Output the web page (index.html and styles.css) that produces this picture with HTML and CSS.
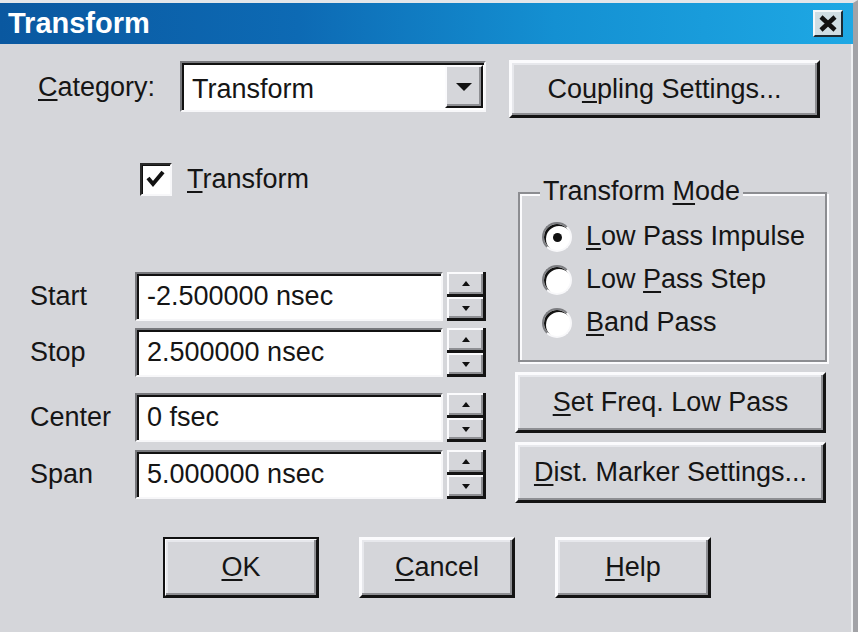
FILE: index.html
```html
<!DOCTYPE html>
<html lang="en">
<head>
  <meta charset="UTF-8">
  <meta name="viewport" content="width=device-width, initial-scale=1.0">
  <title>Transform</title>
  <link rel="stylesheet" href="styles.css">
</head>
<body>

  <div class="window">
    <div class="titlebar">
      <span class="title">Transform</span>
      <span class="close-btn">
        <svg width="24" height="21" viewBox="0 0 24 21">
          <path d="M5 4 L19 17 M19 4 L5 17" stroke="#111" stroke-width="4.5" fill="none"/>
        </svg>
      </span>
    </div>

    <div class="body">
      <div class="top-row">
        <span class="cat-label"><u>C</u>ategory:</span>
        <div class="combo">
          <span class="combo-text">Transform</span>
          <span class="combo-btn"><span class="arrow-down big"></span></span>
        </div>
        <button type="button" class="btn btn-coupling">Co<u>u</u>pling Settings...</button>
      </div>

      <div class="main">
        <div class="left-col">
          <div class="check-row">
            <span class="checkbox">
              <svg width="26" height="27" viewBox="0 0 26 27">
                <path d="M5 12 L10 18 L20 6" stroke="#111" stroke-width="4" fill="none"/>
              </svg>
            </span>
            <span><u>T</u>ransform</span>
          </div>

          <div class="fields">
            <div class="field-row">
              <span class="field-label">Start</span>
              <div class="edit">-2.500000 nsec</div>
              <div class="spin">
                <span class="spin-btn"><span class="arrow-up"></span></span>
                <span class="spin-btn"><span class="arrow-down"></span></span>
              </div>
            </div>
            <div class="field-row">
              <span class="field-label">Stop</span>
              <div class="edit">2.500000 nsec</div>
              <div class="spin">
                <span class="spin-btn"><span class="arrow-up"></span></span>
                <span class="spin-btn"><span class="arrow-down"></span></span>
              </div>
            </div>
            <div class="field-row spaced">
              <span class="field-label">Center</span>
              <div class="edit">0 fsec</div>
              <div class="spin">
                <span class="spin-btn"><span class="arrow-up"></span></span>
                <span class="spin-btn"><span class="arrow-down"></span></span>
              </div>
            </div>
            <div class="field-row">
              <span class="field-label">Span</span>
              <div class="edit">5.000000 nsec</div>
              <div class="spin">
                <span class="spin-btn"><span class="arrow-up"></span></span>
                <span class="spin-btn"><span class="arrow-down"></span></span>
              </div>
            </div>
          </div>
        </div>

        <div class="right-col">
          <div class="group">
            <span class="group-title">Transform <u>M</u>ode</span>
            <div class="radio-row"><span class="radio checked"></span><span><u>L</u>ow Pass Impulse</span></div>
            <div class="radio-row"><span class="radio"></span><span>Low <u>P</u>ass Step</span></div>
            <div class="radio-row"><span class="radio"></span><span><u>B</u>and Pass</span></div>
          </div>
          <button type="button" class="btn btn-wide"><u>S</u>et Freq. Low Pass</button>
          <button type="button" class="btn btn-wide"><u>D</u>ist. Marker Settings...</button>
        </div>
      </div>

      <div class="bottom-row">
        <button type="button" class="btn btn-bottom btn-default"><u>O</u>K</button>
        <button type="button" class="btn btn-bottom"><u>C</u>ancel</button>
        <button type="button" class="btn btn-bottom"><u>H</u>elp</button>
      </div>
    </div>
  </div>

</body>
</html>
```

FILE: styles.css
```css
* {
  box-sizing: border-box;
}

body {
  margin: 0;
  background-color: #fff;
  font-family: "Liberation Sans", Arial, sans-serif;
  font-size: 27px;
  color: #151515;
}

u {
  text-decoration-thickness: 2px;
  text-underline-offset: 3px;
}

.window {
  width: 858px;
  height: 632px;
  background-color: #d5d6da;
  border-top: 3px solid #e3e6ea;
  border-right: 5px solid #a2a3a7;
  box-shadow: inset -2px 0 #eef0f2;
}

/* title bar */
.titlebar {
  height: 41px;
  display: flex;
  align-items: center;
  justify-content: space-between;
  padding: 0 10px 0 8px;
  background: linear-gradient(90deg, #0a58a0 0%, #0d6ab4 35%, #1490d2 65%, #1ea8e4 100%);
}

.title {
  color: #fff;
  font-weight: bold;
  font-size: 29px;
}

.close-btn {
  width: 30px;
  height: 27px;
  display: flex;
  align-items: center;
  justify-content: center;
  background-color: #cfdde3;
  border: 2px solid;
  border-color: #f4f8fa #1b2a33 #1b2a33 #f4f8fa;
}

/* generic raised button */
.btn {
  font: inherit;
  color: inherit;
  background-color: #d5d6da;
  border: 3px solid;
  border-color: #fbfbfd #131313 #131313 #fbfbfd;
  box-shadow: inset -2px -2px #8e8f93, inset 2px 2px #e7e8ec;
  padding: 0;
  cursor: pointer;
}

.body {
  padding-top: 16px;
}

.top-row {
  display: flex;
  align-items: flex-start;
  height: 58px;
  padding-left: 38px;
}

.cat-label {
  width: 142px;
  line-height: 54px;
}

/* sunken white fields */
.combo,
.edit {
  background-color: #fff;
  border: 2px solid;
  border-color: #77787c #f7f7f9 #f7f7f9 #77787c;
  box-shadow: inset 2px 2px #111;
}

.combo {
  width: 306px;
  height: 51px;
  margin-top: 1px;
  display: flex;
}

.combo-text {
  flex: 1;
  padding: 3px 0 0 10px;
  line-height: 47px;
}

.combo-btn {
  width: 38px;
  margin: 2px 1px 2px 0;
  display: flex;
  align-items: center;
  justify-content: center;
  background-color: #d5d6da;
  border: 2px solid;
  border-color: #fbfbfd #131313 #131313 #fbfbfd;
  box-shadow: inset -2px -2px #8e8f93;
}

.arrow-down,
.arrow-up {
  width: 0;
  height: 0;
  border-left: 4px solid transparent;
  border-right: 4px solid transparent;
}

.arrow-down {
  border-top: 5px solid #111;
}

.arrow-up {
  border-bottom: 5px solid #111;
}

.arrow-down.big {
  border-left-width: 8px;
  border-right-width: 8px;
  border-top-width: 8px;
}

.btn-coupling {
  width: 311px;
  height: 58px;
  margin-left: 23px;
}

.main {
  display: flex;
}

/* left column */
.left-col {
  width: 515px;
  padding-left: 30px;
}

.check-row {
  display: flex;
  align-items: center;
  gap: 15px;
  height: 33px;
  margin: 45px 0 0 110px;
}

.checkbox {
  width: 32px;
  height: 33px;
  display: flex;
  align-items: center;
  justify-content: center;
  background-color: #fff;
  border: 2px solid;
  border-color: #2a2a2a #f7f7f9 #f7f7f9 #2a2a2a;
  box-shadow: inset 1px 1px #111;
}

.fields {
  margin-top: 76px;
}

.field-row {
  display: flex;
  height: 49px;
}

.field-row + .field-row {
  margin-top: 7px;
}

.field-row.spaced {
  margin-top: 16px;
}

.field-row:last-child {
  margin-top: 8px;
}

.field-label {
  width: 105px;
  line-height: 49px;
}

.edit {
  width: 308px;
  padding-left: 10px;
  line-height: 45px;
}

.spin {
  width: 39px;
  margin-left: 4px;
  display: flex;
  flex-direction: column;
  background-color: #131313;
  padding: 0 3px 3px 0;
  gap: 3px;
}

.spin-btn {
  flex: 1;
  display: flex;
  align-items: center;
  justify-content: center;
  background-color: #d5d6da;
  border-top: 2px solid #fbfbfd;
  border-left: 2px solid #fbfbfd;
  box-shadow: inset -2px -2px #8e8f93;
}

/* right column */
.right-col {
  width: 311px;
}

.group {
  position: relative;
  width: 309px;
  height: 170px;
  margin: 74px 0 0 3px;
  padding: 21px 0 0 22px;
  border: 2px solid #8c8d91;
  box-shadow: inset 2px 2px #fbfbfd, 2px 2px 0 #fbfbfd;
}

.group-title {
  position: absolute;
  top: -18px;
  left: 20px;
  padding: 0 3px;
  line-height: 30px;
  background-color: #d5d6da;
}

.radio-row {
  display: flex;
  align-items: center;
  gap: 14px;
  height: 43px;
}

.radio {
  position: relative;
  width: 30px;
  height: 30px;
  border-radius: 50%;
  background-color: #fff;
  border: 2px solid;
  border-color: #7c7d81 #f8f8fa #f8f8fa #7c7d81;
  box-shadow: inset 2px 2px #121212;
}

.radio.checked::after {
  content: "";
  position: absolute;
  left: 9px;
  top: 9px;
  width: 9px;
  height: 9px;
  border-radius: 50%;
  background-color: #111;
}

.btn-wide {
  display: block;
  width: 311px;
  height: 61px;
  margin-top: 10px;
}

.btn-wide + .btn-wide {
  margin-top: 9px;
}

/* bottom buttons */
.bottom-row {
  display: flex;
  gap: 40px;
  padding-left: 163px;
  margin-top: 34px;
}

.btn-bottom {
  width: 156px;
  height: 61px;
}

.btn-default {
  outline: 2px solid #111;
  outline-offset: -2px;
}
```
